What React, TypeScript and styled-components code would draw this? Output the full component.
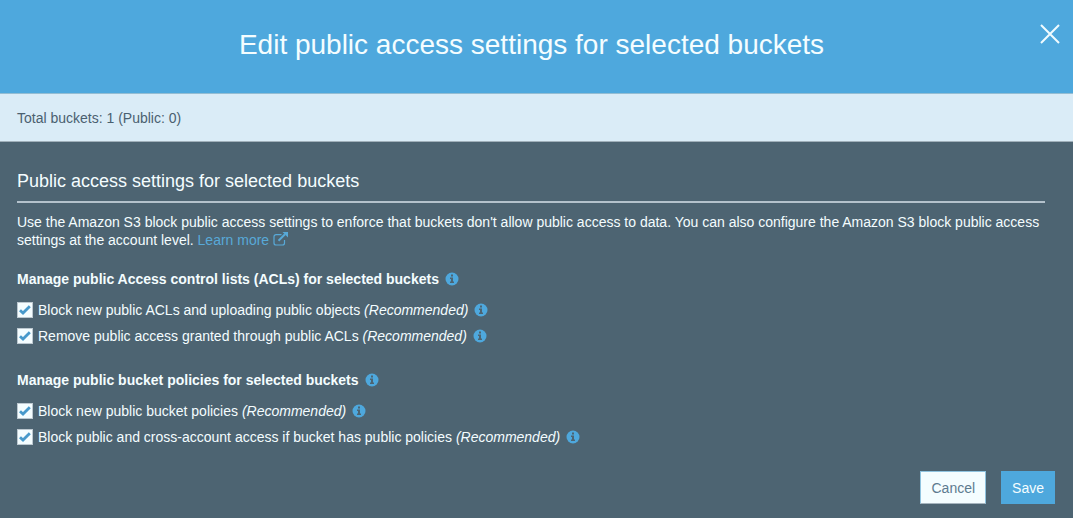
import React from "react";
import styled, { createGlobalStyle } from "styled-components";

const GlobalStyle = createGlobalStyle`
  *, *::before, *::after { box-sizing: border-box; }
  body {
    margin: 0;
    background: #4d6472;
    color: #f4fdff;
    font-family: "Liberation Sans", Arial, sans-serif;
    font-size: 14px;
    line-height: 18px;
  }
`;

const Dialog = styled.div`
  display: flex;
  flex-direction: column;
  min-height: 100vh;
  background: #4d6472;
`;

const Header = styled.header`
  display: grid;
  grid-template-columns: 36px 1fr 36px;
  align-items: start;
  padding: 20px 10px 24px 0;
  background: #4ea8dd;
`;

const Title = styled.h1`
  grid-column: 2;
  margin: 0;
  padding-top: 1px;
  font-size: 28px;
  font-weight: 400;
  line-height: 48px;
  text-align: center;
`;

const CloseButton = styled.button`
  display: flex;
  justify-content: flex-end;
  padding: 4px 3px;
  border: 0;
  background: none;
  color: #f0fbff;
  cursor: pointer;
`;

const Summary = styled.div`
  padding: 15px 17px 14px;
  background: #daecf7;
  color: #4a6070;
  border-top: 1px solid #94bdd3;
  border-bottom: 1px solid #a0b0ba;
`;

const Content = styled.main`
  padding: 27px 28px 0 17px;
`;

const SectionTitle = styled.h2`
  margin: 0 0 10px;
  padding-bottom: 8px;
  border-bottom: 2px solid #b4c2cc;
  font-size: 18px;
  font-weight: 400;
  line-height: 24px;
`;

const Intro = styled.p`
  margin: 0;
`;

const Link = styled.a`
  color: #58a9d8;
  text-decoration: none;
  white-space: nowrap;

  svg {
    margin-left: 4px;
    vertical-align: -1px;
  }
`;

const Group = styled.fieldset`
  margin: 21px 0 0;
  padding: 0 0 1px;
  border: 0;
`;

const GroupTitle = styled.legend`
  display: flex;
  align-items: center;
  gap: 6px;
  padding: 0;
  margin-bottom: 9px;
  font-weight: 700;
`;

const OptionRow = styled.div`
  display: flex;
  align-items: center;
  height: 26px;
`;

const OptionLabel = styled.label`
  display: flex;
  align-items: center;
  gap: 5px;
  margin-right: 6px;
`;

const Checkbox = styled.input`
  appearance: none;
  flex: none;
  width: 16px;
  height: 16px;
  margin: 0;
  border: 1px solid #bcc8d0;
  background: #f4fdff;

  &:checked {
    background: #f4fdff
      url("data:image/svg+xml,%3Csvg xmlns='http://www.w3.org/2000/svg' viewBox='0 0 14 14'%3E%3Cpath d='M2 7.2 5 10 11.8 3.2' fill='none' stroke='%234799cb' stroke-width='2.8'/%3E%3C/svg%3E")
      center / 14px 14px no-repeat;
  }
`;

const InfoButton = styled.button`
  display: flex;
  flex: none;
  padding: 0;
  border: 0;
  background: none;
  color: #4ea8dd;
  cursor: pointer;
`;

const Footer = styled.footer`
  display: flex;
  justify-content: flex-end;
  gap: 15px;
  padding: 20px 18px 14px;
`;

const Button = styled.button<{ $primary?: boolean }>`
  height: 33px;
  padding: 0 10px;
  border: 1px solid ${(p) => (p.$primary ? "#4ea8dd" : "#8fc3df")};
  border-bottom-color: ${(p) => (p.$primary ? "#4ea8dd" : "#a5b4be")};
  background: ${(p) => (p.$primary ? "#4ea8dd" : "#f4fdff")};
  color: ${(p) => (p.$primary ? "#f4fdff" : "#5d7b90")};
  font: inherit;
  cursor: pointer;
`;

const CloseIcon = () => (
  <svg width="20" height="20" viewBox="0 0 20 20" aria-hidden="true">
    <path d="M1 1 19 19M19 1 1 19" fill="none" stroke="currentColor" strokeWidth="2" />
  </svg>
);

const ExternalIcon = () => (
  <svg width="15" height="14" viewBox="0 0 15 14" aria-hidden="true">
    <path
      d="M8.5 2.7H3A2 2 0 0 0 1 4.7V11a2 2 0 0 0 2 2h6.5a2 2 0 0 0 2-2V8"
      fill="none"
      stroke="currentColor"
      strokeWidth="1.2"
    />
    <path d="M5.5 8.8 12 2.3" stroke="currentColor" strokeWidth="2" />
    <path d="M9.5 0H15v5.5Z" fill="currentColor" />
  </svg>
);

const Info = ({ topic }: { topic: string }) => (
  <InfoButton type="button" aria-label={`About: ${topic}`}>
    <svg width="14" height="14" viewBox="0 0 14 14" aria-hidden="true">
      <circle cx="7" cy="7" r="6.5" fill="currentColor" />
      <path d="M6 2.5h2v2H6zM5 5.5h3v4h1v1.5H5V9.5h1V7H5z" fill="#4d6472" />
    </svg>
  </InfoButton>
);

const groups = [
  {
    title: "Manage public Access control lists (ACLs) for selected buckets",
    options: [
      "Block new public ACLs and uploading public objects",
      "Remove public access granted through public ACLs",
    ],
  },
  {
    title: "Manage public bucket policies for selected buckets",
    options: [
      "Block new public bucket policies",
      "Block public and cross-account access if bucket has public policies",
    ],
  },
];

export default function App() {
  return (
    <>
      <GlobalStyle />
      <Dialog role="dialog" aria-labelledby="dialog-title">
        <Header>
          <Title id="dialog-title">Edit public access settings for selected buckets</Title>
          <CloseButton type="button" aria-label="Close">
            <CloseIcon />
          </CloseButton>
        </Header>
        <Summary>Total buckets: 1 (Public: 0)</Summary>
        <Content>
          <SectionTitle>Public access settings for selected buckets</SectionTitle>
          <Intro>
            Use the Amazon S3 block public access settings to enforce that buckets don't allow
            public access to data. You can also configure the Amazon S3 block public access
            settings at the account level.{" "}
            <Link href="#learn-more">
              Learn more
              <ExternalIcon />
            </Link>
          </Intro>
          {groups.map((group) => (
            <Group key={group.title}>
              <GroupTitle>
                {group.title}
                <Info topic={group.title} />
              </GroupTitle>
              {group.options.map((option) => (
                <OptionRow key={option}>
                  <OptionLabel>
                    <Checkbox type="checkbox" defaultChecked />
                    <span>
                      {option} <em>(Recommended)</em>
                    </span>
                  </OptionLabel>
                  <Info topic={option} />
                </OptionRow>
              ))}
            </Group>
          ))}
        </Content>
        <Footer>
          <Button type="button">Cancel</Button>
          <Button type="button" $primary>
            Save
          </Button>
        </Footer>
      </Dialog>
    </>
  );
}
